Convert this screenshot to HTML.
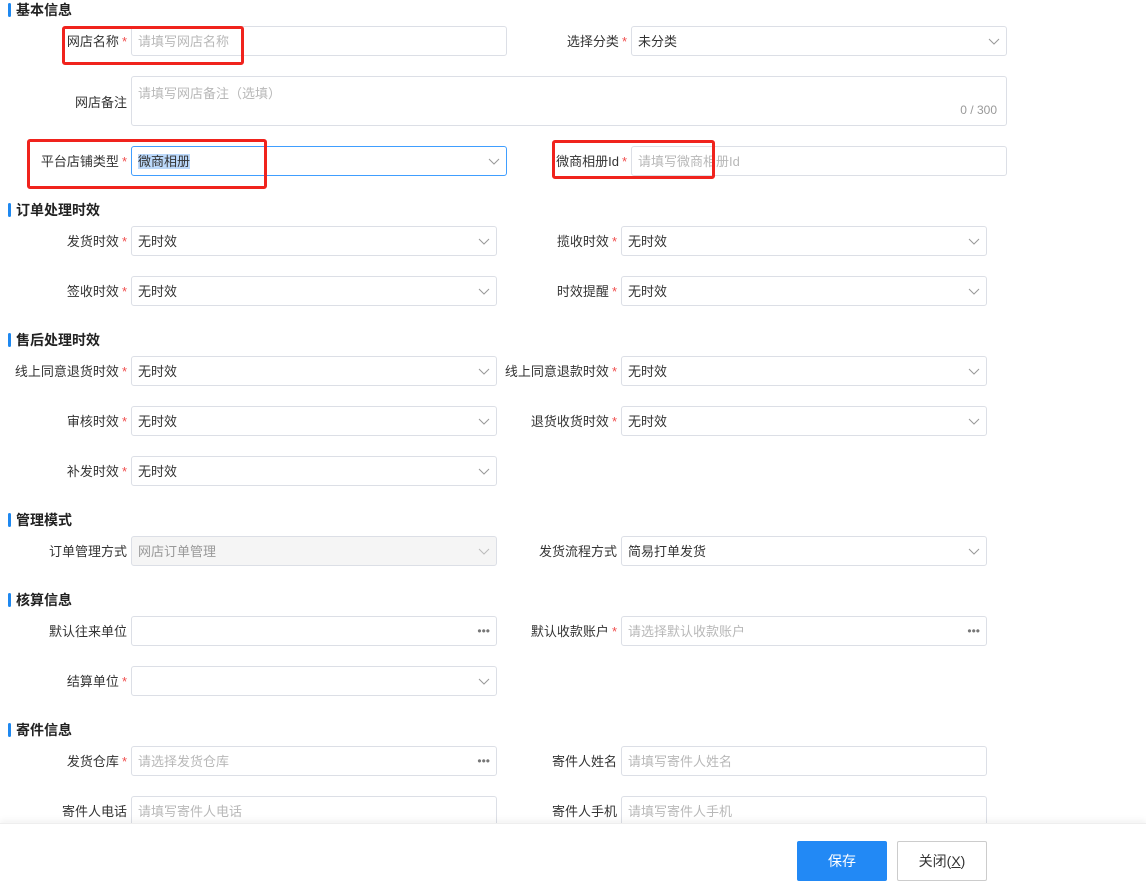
<!DOCTYPE html>
<html><head><meta charset="utf-8">
<style>
*{box-sizing:border-box;margin:0;padding:0}
body{width:1146px;height:884px;background:#fff;position:relative;overflow:hidden;font-family:"Liberation Sans","Noto Sans CJK SC",sans-serif;font-size:13px;color:#333}
.t{position:absolute;left:16px;font-size:14px;font-weight:bold;color:#222;line-height:20px}
.t:before{content:"";position:absolute;left:-8px;top:3px;width:3px;height:14px;background:#1e88f0;border-radius:2px}
.l{position:absolute;text-align:right;line-height:30px;color:#333;white-space:nowrap;padding-top:1px}
.l i{font-style:normal;color:#f04b4b;margin-left:3px}
.in{position:absolute;height:30px;border:1px solid #dcdfe6;border-radius:3px;line-height:29px;padding-left:6px;color:#333;background:#fff;white-space:nowrap}
.ph{color:#b8b8b8}
.in svg{position:absolute;right:6px;top:11px}
.dots{position:absolute;right:6px;top:1px;color:#777;font-size:12px;line-height:26px}
.red{position:absolute;border:2px solid #f0231d;border-radius:3px}
</style></head><body>

<div class="t" style="top:0">基本信息</div>
<div class="l" style="left:0;width:127px;top:26px">网店名称<i>*</i></div>
<div class="in ph" style="left:131px;top:26px;width:376px">请填写网店名称</div>
<div class="l" style="left:500px;width:127px;top:26px">选择分类<i>*</i></div>
<div class="in" style="left:631px;top:26px;width:376px">未分类<svg width="12" height="7"><polyline points="1,1 6,6 11,1" fill="none" stroke="#999" stroke-width="1"/></svg></div>
<div class="l" style="left:0;width:127px;top:87px">网店备注</div>
<div class="in ph" style="left:131px;top:76px;width:876px;height:50px;line-height:34px">请填写网店备注（选填）<span style="position:absolute;right:9px;top:16px;color:#999;font-size:12px">0 / 300</span></div>
<div class="l" style="left:0;width:127px;top:146px">平台店铺类型<i>*</i></div>
<div class="in" style="left:131px;top:146px;width:376px;border-color:#409eff"><span style="background:#bcd9fb">微商相册</span><svg width="12" height="7"><polyline points="1,1 6,6 11,1" fill="none" stroke="#999" stroke-width="1"/></svg></div>
<div class="l" style="left:500px;width:127px;top:146px">微商相册Id<i>*</i></div>
<div class="in ph" style="left:631px;top:146px;width:376px">请填写微商相册Id</div>

<div class="t" style="top:200px">订单处理时效</div>
<div class="l" style="left:0;width:127px;top:226px">发货时效<i>*</i></div>
<div class="in" style="left:131px;top:226px;width:366px">无时效<svg width="12" height="7"><polyline points="1,1 6,6 11,1" fill="none" stroke="#999"/></svg></div>
<div class="l" style="left:500px;width:117px;top:226px">揽收时效<i>*</i></div>
<div class="in" style="left:621px;top:226px;width:366px">无时效<svg width="12" height="7"><polyline points="1,1 6,6 11,1" fill="none" stroke="#999"/></svg></div>
<div class="l" style="left:0;width:127px;top:276px">签收时效<i>*</i></div>
<div class="in" style="left:131px;top:276px;width:366px">无时效<svg width="12" height="7"><polyline points="1,1 6,6 11,1" fill="none" stroke="#999"/></svg></div>
<div class="l" style="left:500px;width:117px;top:276px">时效提醒<i>*</i></div>
<div class="in" style="left:621px;top:276px;width:366px">无时效<svg width="12" height="7"><polyline points="1,1 6,6 11,1" fill="none" stroke="#999"/></svg></div>

<div class="t" style="top:330px">售后处理时效</div>
<div class="l" style="left:0;width:127px;top:356px">线上同意退货时效<i>*</i></div>
<div class="in" style="left:131px;top:356px;width:366px">无时效<svg width="12" height="7"><polyline points="1,1 6,6 11,1" fill="none" stroke="#999"/></svg></div>
<div class="l" style="left:490px;width:127px;top:356px">线上同意退款时效<i>*</i></div>
<div class="in" style="left:621px;top:356px;width:366px">无时效<svg width="12" height="7"><polyline points="1,1 6,6 11,1" fill="none" stroke="#999"/></svg></div>
<div class="l" style="left:0;width:127px;top:406px">审核时效<i>*</i></div>
<div class="in" style="left:131px;top:406px;width:366px">无时效<svg width="12" height="7"><polyline points="1,1 6,6 11,1" fill="none" stroke="#999"/></svg></div>
<div class="l" style="left:500px;width:117px;top:406px">退货收货时效<i>*</i></div>
<div class="in" style="left:621px;top:406px;width:366px">无时效<svg width="12" height="7"><polyline points="1,1 6,6 11,1" fill="none" stroke="#999"/></svg></div>
<div class="l" style="left:0;width:127px;top:456px">补发时效<i>*</i></div>
<div class="in" style="left:131px;top:456px;width:366px">无时效<svg width="12" height="7"><polyline points="1,1 6,6 11,1" fill="none" stroke="#999"/></svg></div>

<div class="t" style="top:510px">管理模式</div>
<div class="l" style="left:0;width:127px;top:536px">订单管理方式</div>
<div class="in" style="left:131px;top:536px;width:366px;background:#f5f5f5;color:#999">网店订单管理<svg width="12" height="7"><polyline points="1,1 6,6 11,1" fill="none" stroke="#bbb"/></svg></div>
<div class="l" style="left:500px;width:117px;top:536px">发货流程方式</div>
<div class="in" style="left:621px;top:536px;width:366px">简易打单发货<svg width="12" height="7"><polyline points="1,1 6,6 11,1" fill="none" stroke="#999"/></svg></div>

<div class="t" style="top:590px">核算信息</div>
<div class="l" style="left:0;width:127px;top:616px">默认往来单位</div>
<div class="in" style="left:131px;top:616px;width:366px"><span class="dots">•••</span></div>
<div class="l" style="left:500px;width:117px;top:616px">默认收款账户<i>*</i></div>
<div class="in ph" style="left:621px;top:616px;width:366px">请选择默认收款账户<span class="dots">•••</span></div>
<div class="l" style="left:0;width:127px;top:666px">结算单位<i>*</i></div>
<div class="in" style="left:131px;top:666px;width:366px"><svg width="12" height="7"><polyline points="1,1 6,6 11,1" fill="none" stroke="#999"/></svg></div>

<div class="t" style="top:720px">寄件信息</div>
<div class="l" style="left:0;width:127px;top:746px">发货仓库<i>*</i></div>
<div class="in ph" style="left:131px;top:746px;width:366px">请选择发货仓库<span class="dots">•••</span></div>
<div class="l" style="left:500px;width:117px;top:746px">寄件人姓名</div>
<div class="in ph" style="left:621px;top:746px;width:366px">请填写寄件人姓名</div>
<div class="l" style="left:0;width:127px;top:796px">寄件人电话</div>
<div class="in ph" style="left:131px;top:796px;width:366px">请填写寄件人电话</div>
<div class="l" style="left:500px;width:117px;top:796px">寄件人手机</div>
<div class="in ph" style="left:621px;top:796px;width:366px">请填写寄件人手机</div>

<div style="position:absolute;left:0;top:823px;width:1146px;height:61px;background:#fff;border-top:1px solid #eee;box-shadow:0 -3px 6px rgba(0,0,0,0.05)"></div>
<div style="position:absolute;left:797px;top:841px;width:90px;height:40px;background:#2289f5;color:#fff;text-align:center;line-height:40px;font-size:14px;border-radius:2px">保存</div>
<div style="position:absolute;left:897px;top:841px;width:90px;height:40px;border:1px solid #ccc;color:#333;text-align:center;line-height:38px;font-size:14px;border-radius:2px">关闭(<u>X</u>)</div>

<div class="red" style="left:62px;top:26px;width:182px;height:39px;border-width:3px"></div>
<div class="red" style="left:27px;top:139px;width:240px;height:50px;border-width:3px"></div>
<div class="red" style="left:552px;top:140px;width:163px;height:39px;border-width:3px"></div>
</body></html>
